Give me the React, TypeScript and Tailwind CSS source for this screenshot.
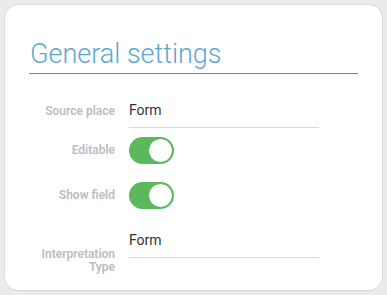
import React from 'react'

function Toggle() {
  return (
    <div className="w-[45px] h-[27px] rounded-full bg-[#5cb85c] flex items-center justify-end p-[1px]">
      <div className="w-[25px] h-[25px] rounded-full bg-white border border-[#4caf50]" />
    </div>
  )
}

function Label({ children, className = '' }: { children: React.ReactNode; className?: string }) {
  return (
    <div className={`w-[110px] text-right text-[12px] leading-[13px] font-semibold text-[#bcbcc3] ${className}`}>
      {children}
    </div>
  )
}

export default function App() {
  return (
    <div className="w-[387px] h-[295px] bg-[#ebebeb] p-[4px]" style={{ fontFamily: 'Roboto, "Liberation Sans", sans-serif' }}>
      <div className="h-[287px] bg-white border border-[#d9d9d9] rounded-[14px] px-[24px] pt-[34px]">
        {/* Title */}
        <div className="text-[27px] leading-[31px] font-light text-[#5ca7d2] pb-[3px] pl-[1px]">
          General settings
        </div>
        <div className="h-[1px] bg-[#3a9bcb]" />

        <div className="-ml-[24px] mt-[20px] flex flex-col">
          {/* Source place */}
          <div className="flex items-center">
            <Label>Source place</Label>
            <div className="ml-[14px] w-[190px] h-[34px] flex items-center border-b border-b-[#d8d8d8] text-[14px] text-[#333]">
              Form
            </div>
          </div>

          {/* Editable */}
          <div className="flex items-center h-[45px]">
            <Label>Editable</Label>
            <div className="ml-[14px]">
              <Toggle />
            </div>
          </div>

          {/* Show field */}
          <div className="flex items-center h-[45px]">
            <Label>Show field</Label>
            <div className="ml-[14px]">
              <Toggle />
            </div>
          </div>

          {/* Interpretation Type */}
          <div className="flex items-start mt-[6px]">
            <Label className="mt-[24px]">
              Interpretation
              <br />
              Type
            </Label>
            <div className="ml-[14px] w-[190px] h-[34px] flex items-center border-b border-b-[#d8d8d8] text-[14px] text-[#333]">
              Form
            </div>
          </div>
        </div>
      </div>
    </div>
  )
}
